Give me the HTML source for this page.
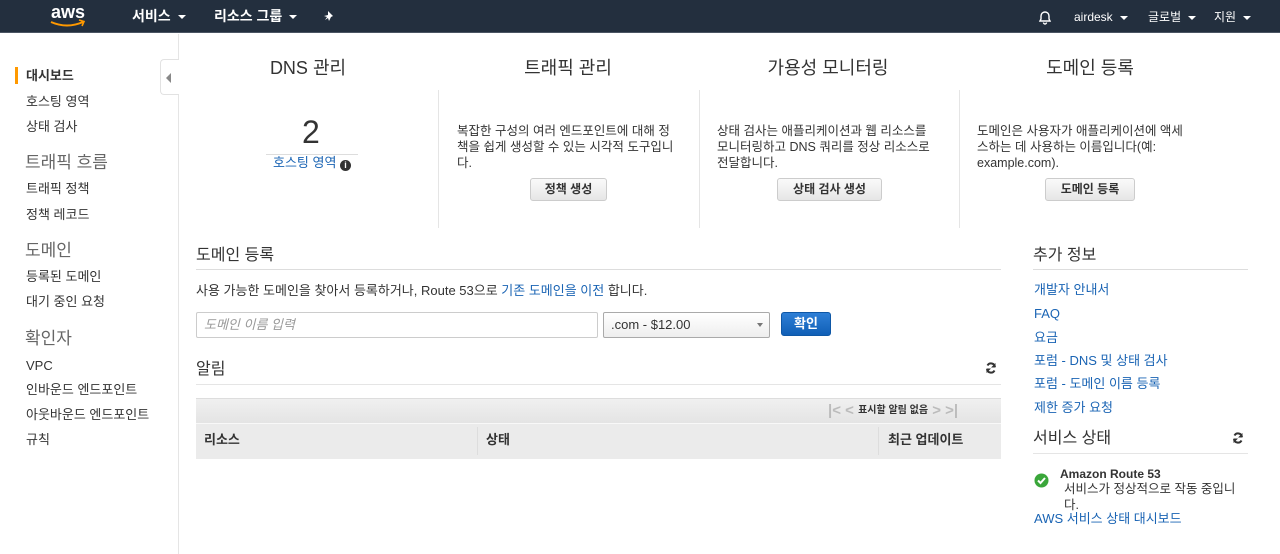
<!DOCTYPE html>
<html><head><meta charset="utf-8"><style>
*{margin:0;padding:0;box-sizing:border-box}
body{width:1280px;height:554px;overflow:hidden;background:#fff;font-family:"Liberation Sans","Noto Sans CJK KR",sans-serif;color:#333;font-size:13px;position:relative}
.a{position:absolute;white-space:nowrap;line-height:16px}
.nav{position:absolute;left:0;top:0;width:1280px;height:33px;background:#232f3e;border-bottom:1px solid #4b5563}
.nav .a{color:#fff;font-weight:bold;font-size:14px;top:8px}
.car{display:inline-block;width:0;height:0;border-left:4px solid transparent;border-right:4px solid transparent;border-top:4px solid #fff;margin-left:7px;vertical-align:middle}
.side .a{font-size:13px;color:#333}
.sh{font-size:17px!important;color:#666!important;line-height:20px!important}
.link{color:#1a64b4}
.h{font-size:18px;color:#333;text-align:center;width:250px;line-height:20px}
.vl{position:absolute;width:1px;background:#e5e5e5;top:90px;height:138px}
.btn{position:absolute;height:23px;border:1px solid #ccc;border-radius:3px;background:linear-gradient(#fafafa,#e6e6e6);font-weight:bold;font-size:12px;text-align:center;line-height:21px;color:#333}
.p{font-size:12.5px;line-height:16px;color:#333;white-space:normal;word-break:break-all}
.hr{position:absolute;height:1px;background:#ddd}
.big{font-size:16px;line-height:20px}
</style></head><body>
<div class="nav">
<svg class="a" style="left:49px;top:2px" width="40" height="28" viewBox="0 0 40 28"><text x="2" y="16" fill="#fff" font-family="Liberation Sans" font-weight="bold" font-size="18">aws</text><path d="M2 20 Q18 27 34 20" stroke="#f90" stroke-width="2" fill="none"/><path d="M30 18 L35 19.5 L33 24" stroke="#f90" stroke-width="1.6" fill="none"/></svg>
<div class="a" style="left:132px">서비스<span class="car"></span></div>
<div class="a" style="left:214px">리소스 그룹<span class="car"></span></div>
<svg class="a" style="left:323px;top:9px" width="14" height="14" viewBox="0 0 14 14"><path d="M5 2 L10 7 L8 8 L6 12 L5 9 L2 11 L4 8 L1 7 L5 6 Z" fill="#fff"/></svg>
<svg class="a" style="left:1037px;top:9px" width="16" height="16" viewBox="0 0 16 16"><path d="M3 12 L4 10 V7 A4 4 0 0 1 12 7 V10 L13 12 Z M6.5 13.5 A1.5 1.5 0 0 0 9.5 13.5" stroke="#fff" stroke-width="1.4" fill="none"/></svg>
<div class="a" style="left:1074px;font-weight:normal;font-size:12px;top:9px">airdesk<span class="car"></span></div>
<div class="a" style="left:1148px;font-weight:normal;font-size:12px;top:9px">글로벌<span class="car"></span></div>
<div class="a" style="left:1214px;font-weight:normal;font-size:12px;top:9px">지원<span class="car"></span></div>
</div>
<div style="position:absolute;left:178px;top:34px;width:1px;height:520px;background:#e5e5e5"></div>
<div style="position:absolute;left:160px;top:59px;width:19px;height:36px;border:1px solid #e2e2e2;border-right:none;background:#fff;border-radius:4px 0 0 4px"></div>
<div class="a" style="left:166px;top:73px;width:0;height:0;border-top:5px solid transparent;border-bottom:5px solid transparent;border-right:5px solid #888"></div>
<div class="side">
<div style="position:absolute;left:15px;top:67px;width:3px;height:17px;background:#f90"></div>
<div class="a" style="left:26px;top:68px;font-weight:bold">대시보드</div>
<div class="a" style="left:26px;top:94px">호스팅 영역</div>
<div class="a" style="left:26px;top:119px">상태 검사</div>
<div class="a sh" style="left:25px;top:153px">트래픽 흐름</div>
<div class="a" style="left:26px;top:181px">트래픽 정책</div>
<div class="a" style="left:26px;top:207px">정책 레코드</div>
<div class="a sh" style="left:25px;top:241px">도메인</div>
<div class="a" style="left:26px;top:269px">등록된 도메인</div>
<div class="a" style="left:26px;top:294px">대기 중인 요청</div>
<div class="a sh" style="left:25px;top:329px">확인자</div>
<div class="a" style="left:26px;top:358px">VPC</div>
<div class="a" style="left:26px;top:382px">인바운드 엔드포인트</div>
<div class="a" style="left:26px;top:407px">아웃바운드 엔드포인트</div>
<div class="a" style="left:26px;top:432px">규칙</div>
</div>
<div class="a h" style="left:183px;top:58px">DNS 관리</div>
<div class="a h" style="left:443px;top:58px">트래픽 관리</div>
<div class="a h" style="left:703px;top:58px">가용성 모니터링</div>
<div class="a h" style="left:965px;top:58px">도메인 등록</div>
<div class="vl" style="left:438px"></div><div class="vl" style="left:699px"></div><div class="vl" style="left:959px"></div>
<div class="a" style="left:302px;top:114px;font-size:32px;line-height:36px;color:#333">2</div>
<div class="hr" style="left:266px;top:154px;width:92px;background:#ddd"></div>
<div class="a link" style="left:273px;top:155px;font-size:13px">호스팅 영역 <span style="display:inline-block;width:11px;height:11px;border-radius:50%;background:#333;color:#fff;font-size:9px;line-height:11px;text-align:center;font-weight:bold;vertical-align:-1px">i</span></div>
<div class="a p" style="left:457px;top:123px;width:218px">복잡한 구성의 여러 엔드포인트에 대해 정책을 쉽게 생성할 수 있는 시각적 도구입니다.</div>
<div class="btn" style="left:530px;top:178px;width:77px">정책 생성</div>
<div class="a p" style="left:717px;top:123px;width:225px;word-break:keep-all">상태 검사는 애플리케이션과 웹 리소스를 모니터링하고 DNS 쿼리를 정상 리소스로 전달합니다.</div>
<div class="btn" style="left:777px;top:178px;width:105px">상태 검사 생성</div>
<div class="a p" style="left:977px;top:123px;width:212px">도메인은 사용자가 애플리케이션에 액세스하는 데 사용하는 이름입니다(예: <span style="white-space:nowrap">example.com).</span></div>
<div class="btn" style="left:1045px;top:178px;width:90px">도메인 등록</div>
<div class="a big" style="left:196px;top:246px">도메인 등록</div>
<div class="hr" style="left:196px;top:269px;width:805px"></div>
<div class="a" style="left:196px;top:283px">사용 가능한 도메인을 찾아서 등록하거나, Route 53으로 <span class="link">기존 도메인을 이전</span> 합니다.</div>
<div class="a" style="left:196px;top:312px;width:402px;height:26px;border:1px solid #ccc;border-radius:2px;color:#999;font-style:italic;padding:4px 7px">도메인 이름 입력</div>
<div class="a" style="left:603px;top:312px;width:167px;height:26px;border:1px solid #aaa;border-radius:2px;background:linear-gradient(#fff,#eee);padding:4px 7px;font-size:13px">.com - $12.00<span style="position:absolute;right:6px;top:10px;border-left:3px solid transparent;border-right:3px solid transparent;border-top:4px solid #777"></span></div>
<div class="a" style="left:781px;top:312px;width:50px;height:24px;border-radius:3px;background:linear-gradient(#2e7fd6,#105fb6);border:1px solid #0e57a6;color:#fff;font-weight:bold;text-align:center;line-height:22px">확인</div>
<div class="a big" style="left:196px;top:360px">알림</div>
<svg class="a" style="left:985px;top:362px" width="12" height="12" viewBox="0 0 12 12"><path d="M10 5 A4 4 0 0 0 2.5 3.5 M2 7 A4 4 0 0 0 9.5 8.5" stroke="#333" stroke-width="2" fill="none"/><path d="M10.5 1 V5.5 H6 Z M1.5 11 V6.5 H6 Z" fill="#333"/></svg>
<div class="hr" style="left:196px;top:384px;width:805px;background:#e5e5e5"></div>
<div style="position:absolute;left:196px;top:398px;width:805px;height:25px;background:linear-gradient(#f0f0f0,#e4e4e4);border-top:1px solid #ddd"></div>
<div class="a" style="left:828px;top:403px;font-size:15px;color:#bbb;font-weight:bold">|&lt; &lt; <span style="font-size:10px;color:#333;vertical-align:2px">표시할 알림 없음</span> &gt; &gt;|</div>
<div style="position:absolute;left:196px;top:423px;width:805px;height:36px;background:#ebebeb;border-top:1px solid #f8f8f8"></div>
<div style="position:absolute;left:477px;top:427px;width:1px;height:28px;background:#ddd"></div>
<div style="position:absolute;left:878px;top:427px;width:1px;height:28px;background:#ddd"></div>
<div class="a" style="left:204px;top:432px;font-weight:bold">리소스</div>
<div class="a" style="left:486px;top:432px;font-weight:bold">상태</div>
<div class="a" style="left:888px;top:432px;font-weight:bold">최근 업데이트</div>
<div class="a big" style="left:1033px;top:246px">추가 정보</div>
<div class="hr" style="left:1033px;top:269px;width:215px"></div>
<div class="a link" style="left:1034px;top:282px">개발자 안내서</div>
<div class="a link" style="left:1034px;top:306px">FAQ</div>
<div class="a link" style="left:1034px;top:330px">요금</div>
<div class="a link" style="left:1034px;top:353px">포럼 - DNS 및 상태 검사</div>
<div class="a link" style="left:1034px;top:376px">포럼 - 도메인 이름 등록</div>
<div class="a link" style="left:1034px;top:400px">제한 증가 요청</div>
<div class="a big" style="left:1033px;top:429px">서비스 상태</div>
<svg class="a" style="left:1232px;top:432px" width="12" height="12" viewBox="0 0 12 12"><path d="M10 5 A4 4 0 0 0 2.5 3.5 M2 7 A4 4 0 0 0 9.5 8.5" stroke="#333" stroke-width="2" fill="none"/><path d="M10.5 1 V5.5 H6 Z M1.5 11 V6.5 H6 Z" fill="#333"/></svg>
<div class="hr" style="left:1033px;top:453px;width:215px;background:#e5e5e5"></div>
<svg class="a" style="left:1034px;top:473px" width="15" height="15" viewBox="0 0 15 15"><circle cx="7.5" cy="7.5" r="7" fill="#3aa63a"/><path d="M4 7.5 L6.5 10 L11 5" stroke="#fff" stroke-width="2" fill="none"/></svg>
<div class="a" style="left:1060px;top:466px;font-weight:bold;font-size:12px">Amazon Route 53</div>
<div class="a p" style="left:1064px;top:481px;width:180px;font-size:12.5px;word-break:normal">서비스가 정상적으로 작동 중입니다.</div>
<div class="a link" style="left:1034px;top:511px">AWS 서비스 상태 대시보드</div>
</body></html>
